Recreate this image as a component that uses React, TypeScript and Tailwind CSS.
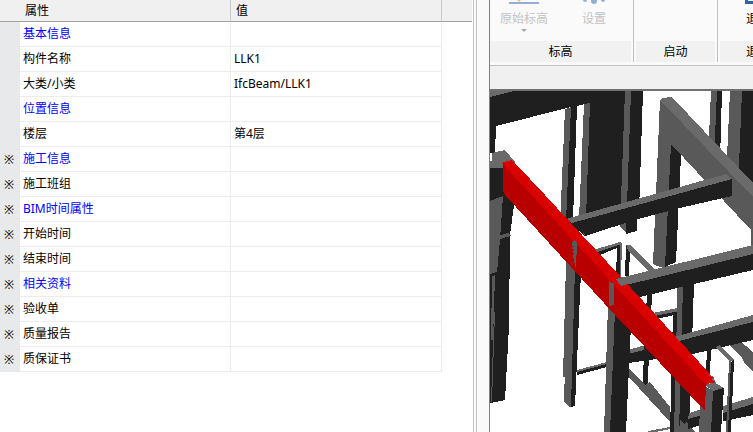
import type { ReactNode } from "react";
import clsx from "clsx";

type PropertyRow = {
  name: string;
  value?: string;
  heading?: boolean;
  custom?: boolean;
};

const rows: PropertyRow[] = [
  { name: "基本信息", heading: true },
  { name: "构件名称", value: "LLK1" },
  { name: "大类/小类", value: "IfcBeam/LLK1" },
  { name: "位置信息", heading: true },
  { name: "楼层", value: "第4层" },
  { name: "施工信息", heading: true, custom: true },
  { name: "施工班组", custom: true },
  { name: "BIM时间属性", heading: true, custom: true },
  { name: "开始时间", custom: true },
  { name: "结束时间", custom: true },
  { name: "相关资料", heading: true, custom: true },
  { name: "验收单", custom: true },
  { name: "质量报告", custom: true },
  { name: "质保证书", custom: true },
];

const DARK = "#1f1f1f";
const SIDE = "#595959";
const TOP = "#6a6a6a";
const WHITE = "#ffffff";

// [fill, points], painted back to front
const faces: [string, string][] = [
  // rear beam and wall columns
  [DARK, "490,91 643,91 639,213 586,219 590,103 577,106 571,107 496,126 495,153 490,153"],
  [TOP, "490,91 514,91 490,97"],
  [SIDE, "565,109 571,107 566,225 560,225"],
  [DARK, "571,107 577,106 573,220 566,222"],
  [WHITE, "577,106 584,105 580,218 573,220"],
  [SIDE, "584,104 590,103 586,219 579,219"],
  [SIDE, "625,91 631,91 627,233 620,227"],
  [DARK, "631,91 643,91 637,231 626,234"],
  // upper right columns
  [SIDE, "711,91 717,91 714,160 708,160"],
  [DARK, "717,91 722,91 720,160 714,160"],
  [SIDE, "730,91 742,91 739,180 726,180"],
  [DARK, "742,91 753,91 753,190 738,190"],
  // large frame with sloping beam
  [SIDE, "660,100 671,110 671,144 667,267 660,267 653,264"],
  [DARK, "671,144 681,155 676,262 665,267"],
  [SIDE, "660,100 753,197 753,247 751,247 751,230 671,144"],
  [TOP, "660,100 662,98 672,97 753,183 753,197"],
  // middle beam
  [DARK, "568,222 732,179 732,196 680,208 638,219 585,236"],
  [TOP, "566,219 726,174 732,179 572,223"],
  [SIDE, "583,234 584,232 585,236"],
  // small frames behind the highlighted beam
  [TOP, "593,250 620,242 622,244 597,252"],
  [DARK, "597,252 622,244 621,277 616,277 617,248 600,255"],
  [TOP, "620,244 622,243 621,277 620,277"],
  [DARK, "626,246 630,249 629,277 625,276"],
  [TOP, "626,245 630,245 655,270 648,271 628,250"],
  [DARK, "647,294 652,293 651,318 646,312"],
  [TOP, "653,313 677,308 679,311 656,316"],
  [DARK, "655,316 679,311 679,316 674,315 657,319"],
  // lower right sloping beam
  [SIDE, "727,343 738,339 753,352 753,372 744,362 742,358"],
  // columns under the right beam
  [SIDE, "677,287 683,286 679,432 674,432"],
  [DARK, "683,285 694,284 689,432 679,432"],
  [DARK, "673,312 677,312 674,432 670,432"],
  // lower beam
  [DARK, "628,353 683,339 753,322 753,340 693,354 628,363"],
  [TOP, "628,350 753,315 753,322 628,354"],
  [DARK, "644,345 649,344 648,388 643,386"],
  [SIDE, "629,369 643,383 645,385 650,382 670,407 670,422 629,377"],
  [SIDE, "680,420 685,425 686,421 695,432 679,432"],
  [TOP, "648,431 670,427 670,429 655,432 648,432"],
  // lower right window frame and bottom beam
  [DARK, "707,348 711,347 710,376 706,372"],
  [TOP, "716,347 720,345 734,360 730,362"],
  [DARK, "723,412 753,404 753,415 723,421"],
  [TOP, "723,406 753,397 753,404 723,413"],
  [DARK, "688,418 701,414 700,425 688,429"],
  [TOP, "689,413 702,409 702,415 688,419"],
  [SIDE, "729,361 731,362 729,432 726,432"],
  [DARK, "731,362 734,360 731,432 728,432"],
  // right beam
  [DARK, "622,285 753,254 753,270 694,284 640,297"],
  [TOP, "616,279 753,245 753,254 622,286"],
  // left column with side pieces
  [DARK, "490,168 504,164 505,195 514,205 510,235 509,326 505,400 490,403"],
  [SIDE, "490,201 503,196 500,240 497,272 490,274"],
  [SIDE, "498,236 508,233 511,236 500,239"],
  [SIDE, "492,276 495,275 493,340 491,340"],
  [SIDE, "494,312 495,312 492,402 491,402"],
  [TOP, "492,153 505,150 515,162 512,168 490,168 490,161 492,161"],
  // centre column
  [SIDE, "566,262 568,262 565,377 563,377"],
  [SIDE, "568,260 575,266 572,407 569,407 564,402"],
  [DARK, "575,266 581,272 575,406 571,407"],
  [TOP, "577,370 607,362 607,365 577,372"],
  [DARK, "577,372 607,364 607,367 577,375"],
  // front column
  [SIDE, "608,305 615,310 610,432 604,432"],
  [DARK, "615,310 631,324 626,432 610,432"],
  // end column
  [SIDE, "705,386 713,391 711,432 699,432 700,406"],
  [DARK, "713,391 724,388 721,432 711,432"],
  [TOP, "705,385 714,382 724,388 713,391"],
  // highlighted beam
  [TOP, "709,375 713,376 716,383 709,383"],
  ["#b80000", "503,163 706,382 705,411 615,315 505,195 503,191"],
  ["#d90000", "502,163 511,160 515,163 545,195 620,276 654,313 710,374 709,376 713,377 711,379 716,382 707,384 706,385"],
  [SIDE, "609,281 614,284 614,305 609,306"],
  [SIDE, "572,243 574,240 577,242 576,268 574,262 573,256"],
  [TOP, "616,279 622,277 627,284 621,286"],
];

function StructureView() {
  return (
    <svg
      viewBox="490 91 263 341"
      preserveAspectRatio="xMinYMin slice"
      shapeRendering="crispEdges"
      className="min-h-0 w-full flex-1 bg-white"
      role="img"
      aria-label="LLK1"
    >
      {faces.map(([fill, points], i) => (
        <polygon key={i} fill={fill} points={points} />
      ))}
      <path d="M572 246h2M572 249h2M572 253h2M573 258h1M573 263h2" stroke="#b80000" />
    </svg>
  );
}

function LevelIcon() {
  return (
    <svg width="32" height="32" viewBox="0 0 32 32" aria-hidden="true">
      <path d="M8 20h6v6l-3 3-3-3z" fill="#f5c26b" />
      <rect x="1" y="29" width="30" height="2" fill="#93afd6" />
    </svg>
  );
}

function GearIcon() {
  return (
    <svg width="32" height="32" viewBox="0 0 32 32" aria-hidden="true">
      <circle cx="16" cy="17" r="7" fill="none" stroke="#93afd6" strokeWidth="5" />
      <g fill="#93afd6">
        <circle cx="16" cy="28" r="3" />
        <circle cx="7" cy="27" r="2" />
        <circle cx="25" cy="27" r="2" />
      </g>
    </svg>
  );
}

function ExitIcon() {
  return (
    <svg width="32" height="32" viewBox="0 0 32 32" aria-hidden="true">
      <path d="M4.5 4.5h23v25h-23z" fill="none" stroke="#2c62ad" strokeWidth="3" />
    </svg>
  );
}

function RibbonGroup({ label, className, children }: { label: string; className: string; children?: ReactNode }) {
  return (
    <section className={clsx("flex shrink-0 flex-col", className)}>
      <div className="flex h-[41px] items-end overflow-hidden">{children}</div>
      <h2 className="h-[21px] bg-[#f1f1f1] text-center leading-[21px]">{label}</h2>
    </section>
  );
}

function RibbonButton({ icon, label, menu, disabled, className }: { icon: ReactNode; label: string; menu?: boolean; disabled?: boolean; className: string }) {
  return (
    <button type="button" disabled={disabled} className={clsx("flex shrink-0 flex-col items-center disabled:text-[#c3c3c3]", className)}>
      {icon}
      <span className="mt-1 leading-5">{label}</span>
      <span className="flex h-3 items-start">
        {menu && (
          <svg width="6" height="4" viewBox="0 0 6 4" aria-hidden="true">
            <path d="M0 0h6L3 3z" fill="#a8a8a8" />
          </svg>
        )}
      </span>
    </button>
  );
}

function PropertyTable() {
  return (
    <div className="w-[474px] shrink-0 border-r border-[#c0c0c0] bg-white pr-px">
      <table className="w-full table-fixed border-separate border-spacing-0 text-left">
        <colgroup>
          <col className="w-5" />
          <col className="w-[211px]" />
          <col className="w-[211px]" />
          <col />
        </colgroup>
        <thead className="bg-[#f0f0f0]">
          <tr className="h-[22px]">
            <td className="border-b border-[#a0a0a0]" />
            <th className="border-r border-b border-r-[#c8c8c8] border-b-[#a0a0a0] pl-[5px] font-normal leading-5">属性</th>
            <th className="border-r border-b border-r-[#c8c8c8] border-b-[#a0a0a0] pl-[5px] font-normal leading-5">值</th>
            <td className="border-b border-[#a0a0a0]" />
          </tr>
        </thead>
        <tbody>
          {rows.map((row) => (
            <tr key={row.name} className="h-[25px]">
              <td className="bg-[#e7e9eb] pr-0.5 text-center leading-6">{row.custom ? "※" : null}</td>
              <th
                className={clsx(
                  "border-r border-b border-[#ececec] pl-[3px] font-normal leading-6",
                  row.heading && "text-[#0000ff]",
                )}
              >
                {row.name}
              </th>
              <td className="border-r border-b border-[#ececec] pl-[3px] leading-6">{row.value}</td>
              <td />
            </tr>
          ))}
        </tbody>
      </table>
    </div>
  );
}

export default function App() {
  return (
    <main className="flex h-screen overflow-hidden bg-[#fafafa] font-['Noto_Sans','Noto_Sans_CJK_SC',sans-serif] text-xs text-black">
      <PropertyTable />
      <div className="ml-0.5 w-[13px] shrink-0 border-l border-[#c0c0c0]" />
      <div className="flex min-w-0 flex-1 flex-col border-l border-[#808080]">
        <div className="flex gap-0.5 overflow-hidden border-b border-[#c0c0c0] pb-[3px]">
          <RibbonGroup label="标高" className="w-[141px]">
            <RibbonButton icon={<LevelIcon />} label="原始标高" menu disabled className="w-[68px]" />
            <RibbonButton icon={<GearIcon />} label="设置" disabled className="w-[72px]" />
          </RibbonGroup>
          <div className="w-px shrink-0 bg-[#c0c0c0]" />
          <RibbonGroup label="启动" className="w-[79px]" />
          <div className="w-px shrink-0 bg-[#c0c0c0]" />
          <RibbonGroup label="退出" className="w-[76px]">
            <RibbonButton icon={<ExitIcon />} label="退出" className="w-[76px]" />
          </RibbonGroup>
        </div>
        <div className="h-[25px] shrink-0 border-b-2 border-[#707070] bg-[#f0f0f0]" />
        <StructureView />
      </div>
    </main>
  );
}
